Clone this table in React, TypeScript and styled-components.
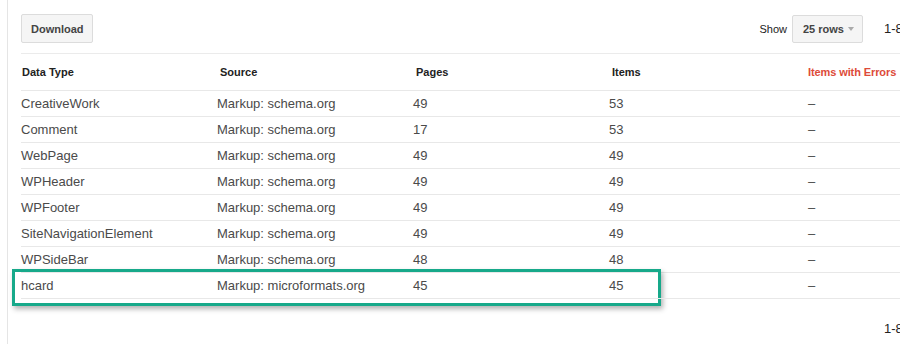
import React from "react";
import styled, { createGlobalStyle } from "styled-components";

const GlobalStyle = createGlobalStyle`
  html, body {
    margin: 0;
    padding: 0;
    background: #fff;
    overflow: hidden;
  }
  body {
    width: 900px;
    height: 344px;
    font-family: "Liberation Sans", Arial, sans-serif;
  }
`;

const Page = styled.div`
  margin-left: 7px;
  border-left: 1px solid #e5e5e5;
  padding: 14px 0 0 13px;
  height: 330px;
`;

const Content = styled.div`
  width: 980px;
`;

const Toolbar = styled.div`
  display: flex;
  align-items: center;
  justify-content: space-between;
  padding-bottom: 10px;
  border-bottom: 1px solid #ebebeb;
`;

const Button = styled.div`
  box-sizing: border-box;
  height: 29px;
  padding: 0 8px 0 9px;
  display: inline-flex;
  align-items: center;
  background: #f5f5f5;
  border: 1px solid #dcdcdc;
  border-radius: 2px;
  font-size: 11px;
  font-weight: bold;
  color: #444;
`;

const Select = styled(Button)`
  height: 28px;
  width: 71px;
  padding: 0 8px 0 10px;
  justify-content: space-between;
`;

const Caret = styled.span`
  width: 0;
  height: 0;
  border-left: 3px solid transparent;
  border-right: 3px solid transparent;
  border-top: 4px solid #aaa;
`;

const RightGroup = styled.div`
  display: flex;
  align-items: center;
`;

const Label = styled.span`
  font-size: 11px;
  color: #222;
  margin-right: 5px;
`;

const PagerWrap = styled.div<{ $gap: number }>`
  display: flex;
  align-items: center;
  margin-left: ${({ $gap }) => $gap}px;
`;

const Count = styled.span`
  font-size: 13px;
  color: #222;
  width: 19px;
`;

const NavButton = styled(Button)`
  width: 41px;
  justify-content: center;
  margin-left: 16px;
  & + & {
    margin-left: 0;
  }
`;

const Arrow = styled.span<{ $dir: "left" | "right" }>`
  width: 6px;
  height: 6px;
  border-left: 2px solid #666;
  border-bottom: 2px solid #666;
  transform: rotate(${({ $dir }) => ($dir === "left" ? 45 : -135)}deg);
`;

const Table = styled.div`
  display: grid;
  grid-template-columns: repeat(5, 196px);
`;

const Row = styled.div`
  display: contents;
`;

const Cell = styled.div<{ $head?: boolean; $error?: boolean }>`
  position: relative;
  box-sizing: border-box;
  height: ${({ $head }) => ($head ? 37 : 26)}px;
  display: flex;
  align-items: center;
  padding-left: ${({ $head }) => ($head ? 3 : 0)}px;
  border-bottom: 1px solid #e8e8e8;
  font-size: ${({ $head }) => ($head ? 11 : 13)}px;
  font-weight: ${({ $head }) => ($head ? "bold" : "normal")};
  color: ${({ $head, $error }) =>
    $error ? "#dd4b39" : $head ? "#222" : "#4a4a4a"};
  &:first-child {
    padding-left: ${({ $head }) => ($head ? 1 : 0)}px;
  }
`;

const ErrorHead = styled.span`
  letter-spacing: -0.1px;
`;

const Dash = styled.span`
  padding-left: 3px;
`;

const Highlight = styled.div`
  position: absolute;
  left: -9px;
  top: -4px;
  width: 649px;
  height: 37px;
  box-sizing: border-box;
  border: 3px solid #17a98a;
  box-shadow: 2px 3px 5px rgba(0, 0, 0, 0.3);
  pointer-events: none;
`;

const Footer = styled.div`
  display: flex;
  justify-content: flex-end;
  padding-top: 15px;
`;

const rows = [
  ["CreativeWork", "Markup: schema.org", "49", "53"],
  ["Comment", "Markup: schema.org", "17", "53"],
  ["WebPage", "Markup: schema.org", "49", "49"],
  ["WPHeader", "Markup: schema.org", "49", "49"],
  ["WPFooter", "Markup: schema.org", "49", "49"],
  ["SiteNavigationElement", "Markup: schema.org", "49", "49"],
  ["WPSideBar", "Markup: schema.org", "48", "48"],
  ["hcard", "Markup: microformats.org", "45", "45"],
];

function Pager({ gap }: { gap: number }) {
  return (
    <PagerWrap $gap={gap}>
      <Count>1-8</Count>
      <NavButton>
        <Arrow $dir="left" />
      </NavButton>
      <NavButton>
        <Arrow $dir="right" />
      </NavButton>
    </PagerWrap>
  );
}

export default function App() {
  return (
    <>
      <GlobalStyle />
      <Page>
        <Content>
          <Toolbar>
            <Button>Download</Button>
            <RightGroup>
              <Label>Show</Label>
              <Select>
                25 rows <Caret />
              </Select>
              <Pager gap={21} />
            </RightGroup>
          </Toolbar>
          <Table>
            <Row>
              <Cell $head>Data Type</Cell>
              <Cell $head>Source</Cell>
              <Cell $head>Pages</Cell>
              <Cell $head>Items</Cell>
              <Cell $head $error>
                <ErrorHead>Items with Errors</ErrorHead>
              </Cell>
            </Row>
            {rows.map((r, i) => (
              <Row key={r[0]}>
                <Cell>
                  {r[0]}
                  {i === rows.length - 1 && <Highlight />}
                </Cell>
                <Cell>{r[1]}</Cell>
                <Cell>{r[2]}</Cell>
                <Cell>{r[3]}</Cell>
                <Cell>
                  <Dash>–</Dash>
                </Cell>
              </Row>
            ))}
          </Table>
          <Footer>
            <Pager gap={0} />
          </Footer>
        </Content>
      </Page>
    </>
  );
}
